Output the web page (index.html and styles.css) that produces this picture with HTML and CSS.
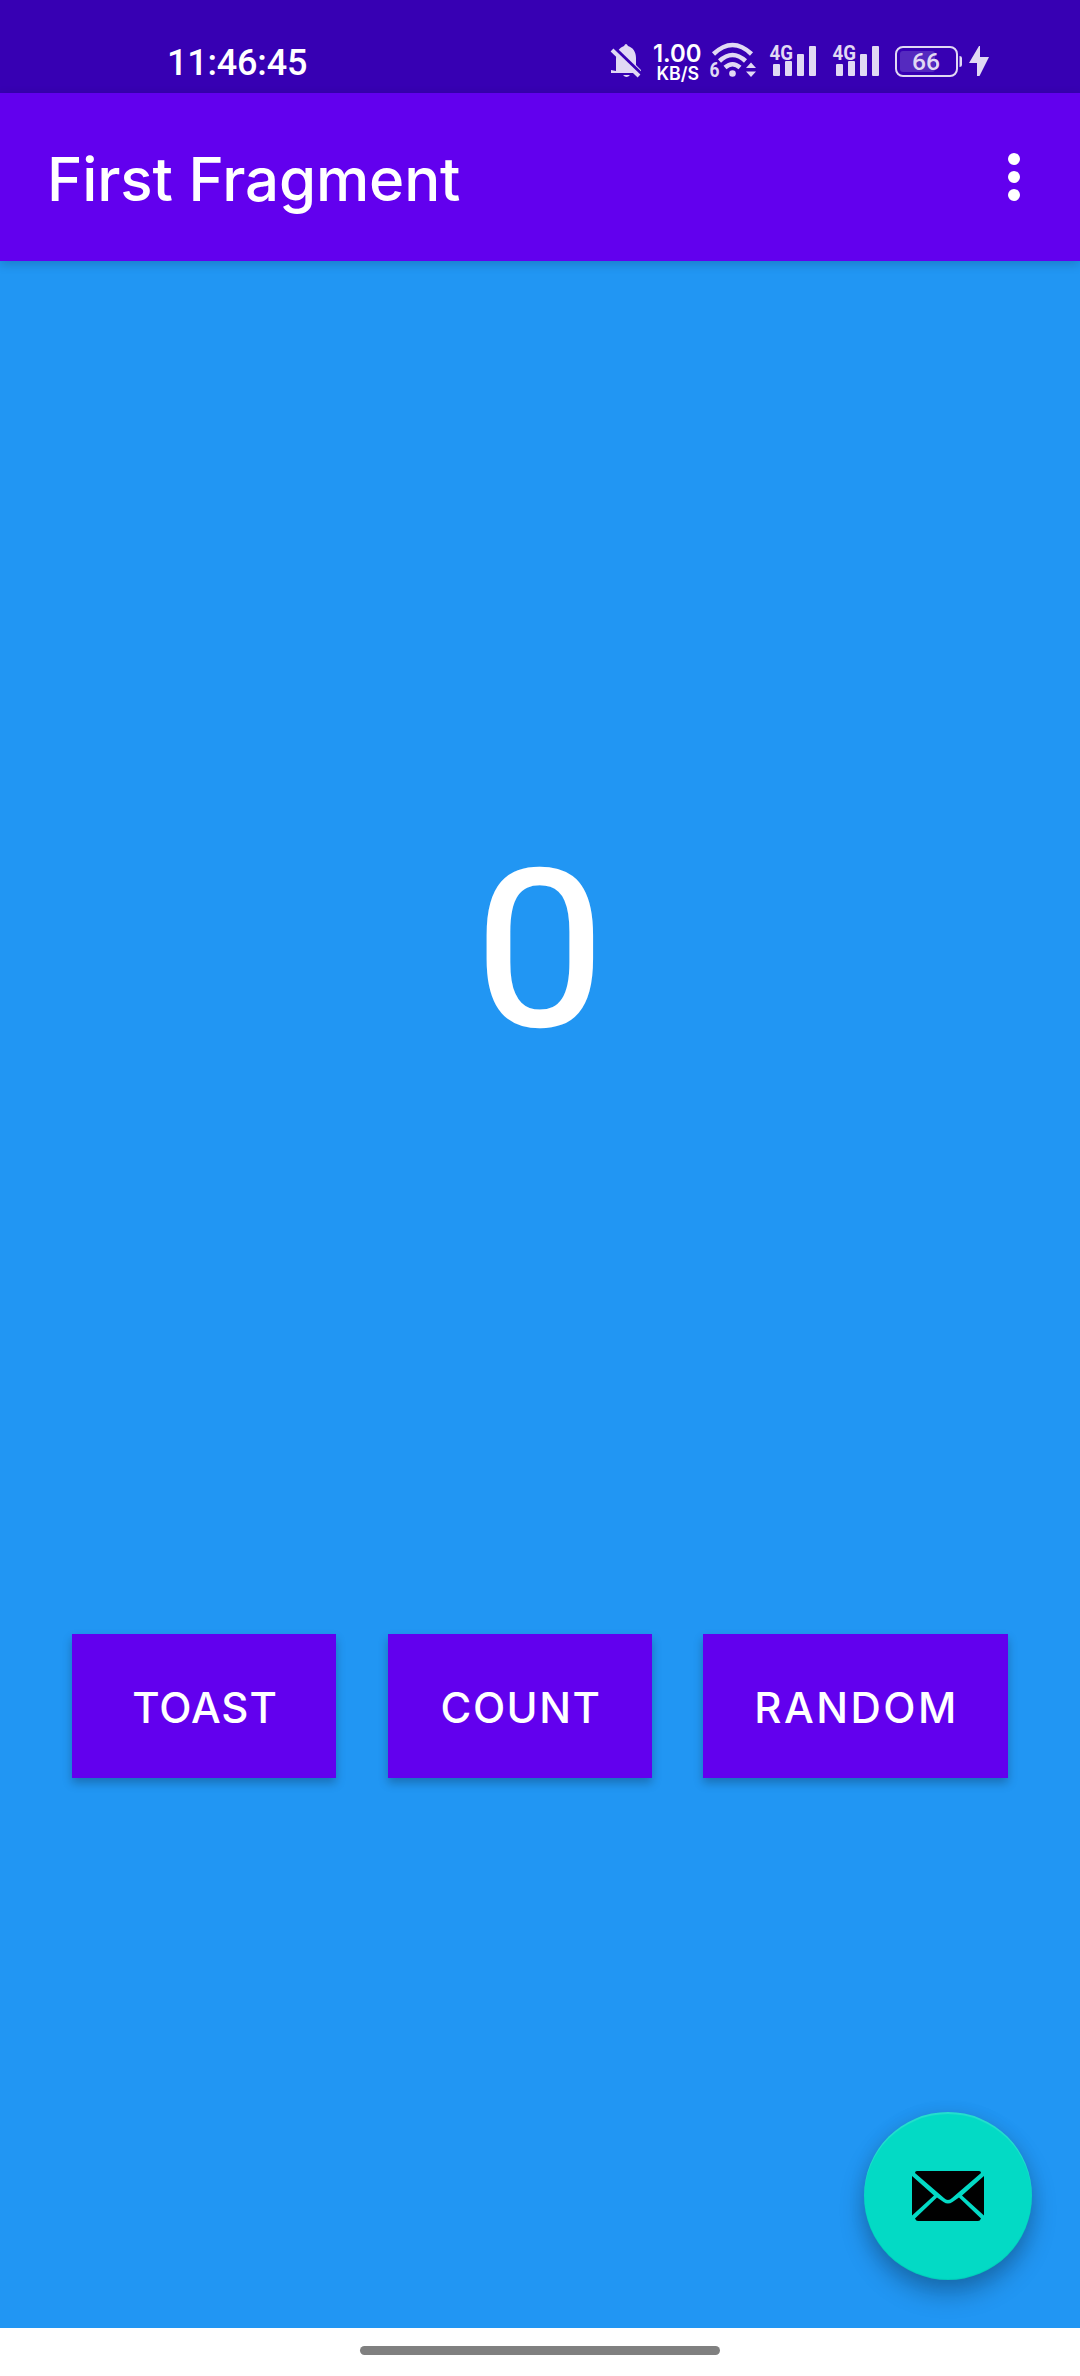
FILE: index.html
```html
<!DOCTYPE html>
<html lang="en">
<head>
<meta charset="utf-8">
<title>First Fragment</title>
<link rel="stylesheet" href="styles.css">
</head>
<body>
<div class="screen">
  <header class="status-bar">
    <time class="clock">11:46:45</time>
    <div class="status-icons">
      <svg class="icon-bell" viewBox="610 40 32 40" width="32" height="40">
        <path d="M616 71V59C616 51 620 47.500 624 46Q626 42 628 46C633 47.500 636 52 636 58V65L641 70V73H611V70Z"/>
        <path d="M623 75H630Q626.500 79 623 75Z"/>
        <path class="bell-gap" d="M613 47L642 75"/>
        <path class="bell-slash" d="M612 50L639 76"/>
      </svg>
      <svg class="speed" viewBox="653 40 50 48" width="50" height="48">
        <text class="speed-value" x="653" y="62" textLength="48.500" lengthAdjust="spacingAndGlyphs">1.00</text>
        <text class="speed-unit" x="656.500" y="80" textLength="42.500" lengthAdjust="spacingAndGlyphs">KB/S</text>
      </svg>
      <svg class="icon-wifi" viewBox="709 40 49 40" width="49" height="40">
        <g class="waves"><path d="M713.500 54Q732.500 36 751.500 54"/><path d="M719.500 61Q732.500 49 745.500 61"/><path d="M725 67.500Q732.500 61 740 67.500"/></g>
        <circle cx="732.500" cy="73.500" r="3.300"/>
        <text class="wifi-generation" x="709.500" y="76.500" textLength="10" lengthAdjust="spacingAndGlyphs">6</text>
        <path d="M746 68L751 62.500L756 68ZM746 71.500H756L751 77Z"/>
      </svg>
      <svg class="icon-signal first-sim" viewBox="769 40 48 40" width="48" height="40">
        <text class="network" x="769.500" y="59.500" textLength="23.500" lengthAdjust="spacingAndGlyphs">4G</text>
        <rect x="773" y="64" width="7" height="12" rx="1"/><rect x="785" y="61" width="7" height="15" rx="1"/><rect x="797" y="54" width="7" height="22" rx="1"/><rect x="809" y="46" width="7" height="30" rx="1"/>
      </svg>
      <svg class="icon-signal second-sim" viewBox="769 40 48 40" width="48" height="40">
        <text class="network" x="769.500" y="59.500" textLength="23.500" lengthAdjust="spacingAndGlyphs">4G</text>
        <rect x="773" y="64" width="7" height="12" rx="1"/><rect x="785" y="61" width="7" height="15" rx="1"/><rect x="797" y="54" width="7" height="22" rx="1"/><rect x="809" y="46" width="7" height="30" rx="1"/>
      </svg>
      <svg class="icon-battery" viewBox="894 40 96 40" width="96" height="40">
        <rect class="battery-case" x="896" y="47" width="61" height="29" rx="7"/>
        <rect class="battery-fill" x="900" y="51" width="35" height="21" rx="3"/>
        <path d="M959.500 56Q962 56 962 58V65Q962 67 959.500 67Z"/>
        <text class="battery-level" x="912" y="70" textLength="28" lengthAdjust="spacingAndGlyphs">66</text>
        <path d="M979 46L969 63H977V76H979.500L989 57H980V46Z"/>
      </svg>
    </div>
  </header>
  <div class="app-bar">
    <h1 class="title">First Fragment</h1>
    <button class="menu" aria-label="More options"><i class="dot"></i><i class="dot"></i><i class="dot"></i></button>
  </div>
  <main class="content">
    <div class="counter">0</div>
    <div class="actions">
      <button class="action toast">TOAST</button>
      <button class="action count">COUNT</button>
      <button class="action random">RANDOM</button>
    </div>
    <button class="fab" aria-label="Email">
      <svg viewBox="0 0 72 50" width="72" height="50">
        <path d="M5 0H67Q69 0 69 2L40 27Q36 31 32 27L3 2Q3 0 5 0Z"/>
        <path d="M0 5L22 24.500L0 44.500ZM72 5L50 24.500L72 44.500Z"/>
        <path d="M25 26.500L31.500 31Q36 34 40.500 31L47 26.500L69 47.500Q68 50 66 50H6Q4 50 3 47.500Z"/>
      </svg>
    </button>
  </main>
  <footer class="nav-bar"><div class="handle"></div></footer>
</div>
</body>
</html>
```
FILE: styles.css
```css
* { box-sizing: border-box; }
body { margin: 0; }
button { border: 0; padding: 0; color: inherit; }
svg { display: block; flex: none; }
.screen {
  width: 1080px;
  height: 2376px;
  display: flex;
  flex-direction: column;
  overflow: hidden;
  background: #2196f3;
  color: #fff;
  font-family: Inter, "Noto Sans", sans-serif;
}
.status-bar {
  height: 93px;
  flex: none;
  padding: 40px 90px 0 167px;
  display: flex;
  justify-content: space-between;
  align-items: flex-start;
  background: #3700b3;
}
.clock { margin-top: 1px; font: 500 36px/44px Roboto, sans-serif; letter-spacing: -0.2px; }
.status-icons { display: flex; align-items: flex-start; fill: #e1d9f4; }
.bell-gap { stroke: #3700b3; stroke-width: 4; }
.bell-slash { stroke: #e1d9f4; stroke-width: 4; }
.speed { margin-left: 11px; fill: #fff; overflow: visible; }
.speed-value { font: 600 24px Inter, sans-serif; }
.speed-unit { font: 600 18px Inter, sans-serif; }
.icon-wifi { margin-left: 6px; }
.waves { fill: none; stroke: #e1d9f4; stroke-width: 4.5; }
.wifi-generation { font: 700 20px Roboto, sans-serif; }
.icon-signal { margin-left: 11px; }
.second-sim { margin-left: 15px; }
.network { font: 700 21px Roboto, sans-serif; }
.icon-battery { margin-left: 14px; }
.battery-case { fill: none; stroke: #e1d9f4; stroke-width: 2; }
.battery-fill { fill: #552abf; }
.battery-level { font: 500 24px Roboto, sans-serif; }
.app-bar {
  height: 168px;
  flex: none;
  padding: 0 60px 0 47px;
  display: flex;
  justify-content: space-between;
  align-items: flex-start;
  background: #6200ee;
  box-shadow: 0 3px 10px rgba(0, 0, 0, .18);
}
.title { margin: 48px 0 0; font-size: 60px; line-height: 76px; font-weight: 500; letter-spacing: -0.15px; }
.menu { margin-top: 60px; background: none; display: flex; flex-direction: column; gap: 6px; }
.dot { width: 12px; height: 12px; border-radius: 50%; background: #fff; }
.content { flex: 1; display: flex; flex-direction: column; padding-top: 550px; }
.counter {
  height: 280px;
  text-align: center;
  font: 400 218px/280px Roboto, sans-serif;
  -webkit-text-stroke: 2.5px #fff;
  transform: scaleX(1.06);
}
.actions { display: flex; margin: 543px 72px 0; }
.action {
  width: 264px;
  height: 144px;
  padding: 3px 0 0 2px;
  background: #6200ee;
  font: 500 42px/50px Inter, sans-serif;
  letter-spacing: 0.9px;
  box-shadow: 0 5px 9px rgba(0, 0, 0, .25);
}
.count { margin-left: 52px; letter-spacing: 1.5px; }
.random { width: 305px; margin-left: 51px; letter-spacing: 2.5px; }
.fab {
  width: 168px;
  height: 168px;
  margin: 334px 48px 0 auto;
  border-radius: 50%;
  display: grid;
  place-items: center;
  background: #03dac5;
  box-shadow: 0 14px 24px rgba(0, 0, 0, .25), 0 2px 18px rgba(0, 0, 0, .09), inset 0 2px 1px rgba(255, 255, 255, .14), inset 0 -1px 1px rgba(0, 0, 0, .06);
}
.fab svg { fill: #000; }
.nav-bar { height: 48px; flex: none; padding-top: 18px; background: #fff; }
.handle { width: 360px; height: 9px; margin: 0 auto; border-radius: 5px; background: #808080; }
```
